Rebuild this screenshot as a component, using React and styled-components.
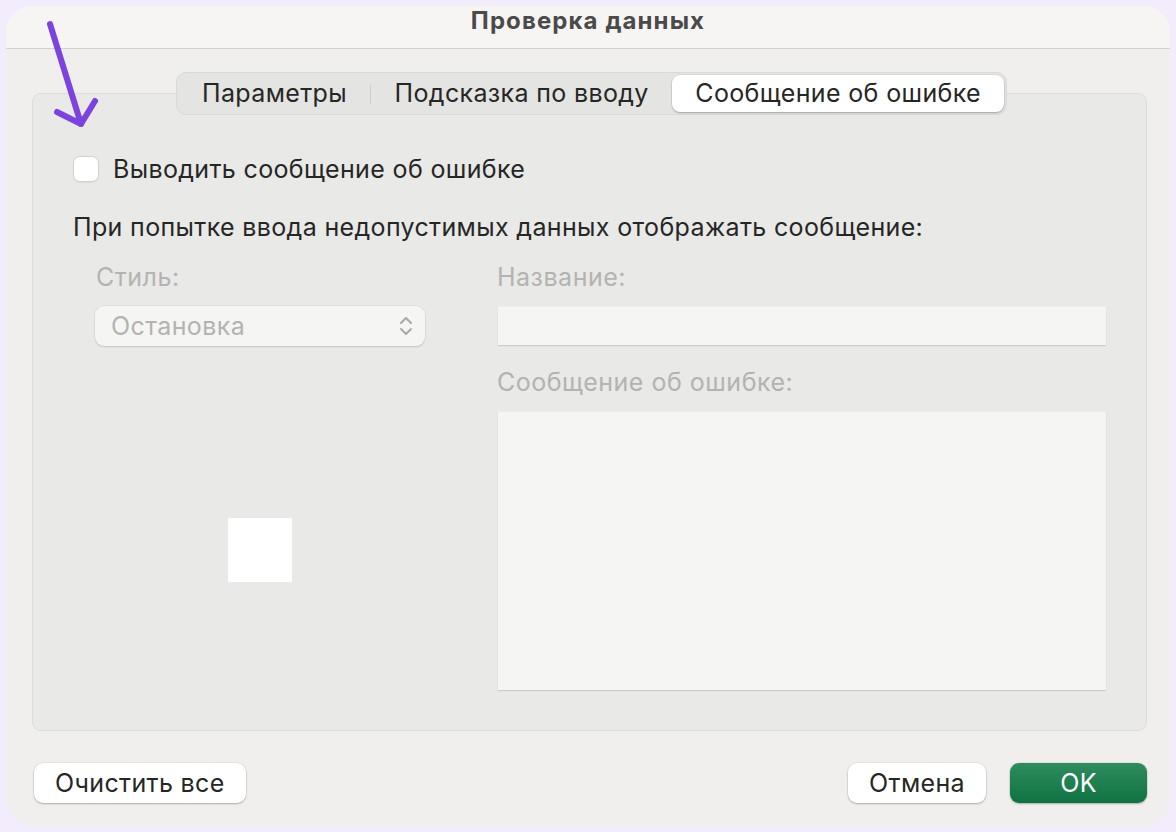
import React from 'react';
import styled, { createGlobalStyle } from 'styled-components';

const GlobalStyle = createGlobalStyle`
  html, body {
    margin: 0;
    padding: 0;
    background: #f3ecfc;
  }
  body {
    font-family: Inter, "Noto Sans", sans-serif;
    letter-spacing: 0.35px;
  }
`;

const Screen = styled.div`
  width: 1176px;
  height: 832px;
  box-sizing: border-box;
  padding: 6px;
  position: relative;
`;

const Dialog = styled.div`
  height: 100%;
  border-radius: 26px;
  overflow: hidden;
  background: #f0efed;
  display: flex;
  flex-direction: column;
`;

const TitleBar = styled.div`
  height: 42px;
  flex-shrink: 0;
  background: #f6f5f3;
  border-bottom: 1px solid #d2d1cf;
  display: flex;
  align-items: center;
  justify-content: center;
`;

const Title = styled.div`
  font-size: 24px;
  font-weight: 700;
  color: #4a4a4a;
  letter-spacing: 1.1px;
  margin-top: -14px;
`;

const Body = styled.div`
  flex: 1;
  display: flex;
  flex-direction: column;
  padding: 23px 23px 22px 26px;
`;

const TabBar = styled.div`
  align-self: center;
  display: flex;
  align-items: center;
  padding: 2px;
  background: #e4e4e2;
  border: 1px solid #d9d9d7;
  border-radius: 10px;
  margin-bottom: -22px;
  position: relative;
  z-index: 1;
  margin-left: 4px;
`;

const Tab = styled.div`
  height: 37px;
  box-sizing: border-box;
  padding: 0 23.3px 2px;
  display: flex;
  align-items: center;
  font-size: 25px;
  color: #262626;
  border-radius: 8px;
  background: ${p => (p.$active ? '#ffffff' : 'transparent')};
  box-shadow: ${p => (p.$active ? '0 1px 2px rgba(0,0,0,0.25), 0 0 0 0.5px rgba(0,0,0,0.08)' : 'none')};
`;

const TabDivider = styled.div`
  width: 1px;
  height: 20px;
  background: #cfcfcd;
`;

const Panel = styled.div`
  height: 638px;
  box-sizing: border-box;
  background: #e9e9e7;
  border: 1px solid #dcdcda;
  border-radius: 9px;
  padding: 60px 40px 40px 40px;
  display: flex;
  flex-direction: column;
`;

const CheckRow = styled.label`
  display: flex;
  align-items: center;
  gap: 14px;
  font-size: 25px;
  color: #262626;
`;

const Checkbox = styled.span`
  width: 26px;
  height: 26px;
  box-sizing: border-box;
  border-radius: 7px;
  background: #ffffff;
  border: 1px solid #d2d2d0;
  box-shadow: 0 1px 1px rgba(0,0,0,0.06);
`;

const Prompt = styled.div`
  margin-top: 28px;
  font-size: 25px;
  color: #262626;
`;

const Columns = styled.div`
  flex: 1;
  margin-top: 20px;
  padding-left: 22px;
  display: grid;
  grid-template-columns: 330px 608px;
  column-gap: 73px;
`;

const Column = styled.div`
  display: flex;
  flex-direction: column;
`;

const FieldLabel = styled.div`
  font-size: 25px;
  letter-spacing: 0.5px;
  color: #b3b3b1;
  height: 30px;
  margin-left: ${p => p.$indent || '0px'};
  margin-top: ${p => p.$gap || '0px'};
  margin-bottom: 14px;
`;

const SelectBox = styled.div`
  height: 40px;
  box-sizing: border-box;
  border-radius: 9px;
  background: #f5f5f3;
  box-shadow: 0 1px 2px rgba(0,0,0,0.14), 0 0 0 0.5px rgba(0,0,0,0.06);
  display: flex;
  align-items: center;
  justify-content: space-between;
  padding: 0 12px 0 16px;
  font-size: 25px;
  letter-spacing: 0.4px;
  color: #b3b3b1;
`;

const Chevrons = styled.svg`
  width: 14px;
  height: 22px;
`;

const IconArea = styled.div`
  flex: 1;
  display: flex;
  align-items: center;
  justify-content: center;
  padding-top: 64px;
`;

const IconSlot = styled.div`
  width: 64px;
  height: 64px;
  background: #ffffff;
`;

const TextField = styled.div`
  height: ${p => p.$h};
  flex-shrink: 0;
  background: #f5f5f3;
  border-top: 1px solid #ececea;
  box-shadow: 0 1px 1px rgba(0,0,0,0.12);
`;

const Footer = styled.div`
  margin-top: 32px;
  display: flex;
  align-items: center;
  padding-left: 2px;
`;

const Button = styled.button`
  height: 40px;
  padding: 0 ${p => p.$pad || '20px'};
  margin-left: ${p => p.$gap || '0px'};
  border: none;
  border-radius: 9px;
  font-family: inherit;
  font-size: 25px;
  letter-spacing: 0.35px;
  color: ${p => (p.$primary ? '#ffffff' : '#262626')};
  background: ${p => (p.$primary ? 'linear-gradient(#2f8c5e, #0f7241)' : '#ffffff')};
  box-shadow: 0 1px 2px rgba(0,0,0,0.25), 0 0 0 0.5px rgba(0,0,0,0.08);
  min-width: ${p => p.$w || 'auto'};
`;

const Spacer = styled.div`
  flex: 1;
`;

const Arrow = styled.svg`
  position: absolute;
  left: 40px;
  top: 16px;
  width: 70px;
  height: 120px;
  pointer-events: none;
`;

export default function App() {
  return (
    <>
      <GlobalStyle />
      <Screen>
        <Dialog>
          <TitleBar>
            <Title>Проверка данных</Title>
          </TitleBar>
          <Body>
            <TabBar>
              <Tab>Параметры</Tab>
              <TabDivider />
              <Tab>Подсказка по вводу</Tab>
              <Tab $active>Сообщение об ошибке</Tab>
            </TabBar>
            <Panel>
              <CheckRow>
                <Checkbox />
                Выводить сообщение об ошибке
              </CheckRow>
              <Prompt>При попытке ввода недопустимых данных отображать сообщение:</Prompt>
              <Columns>
                <Column>
                  <FieldLabel $indent="1px">Стиль:</FieldLabel>
                  <SelectBox>
                    Остановка
                    <Chevrons viewBox="0 0 14 22" fill="none" stroke="#a9a9a7" strokeWidth="2" strokeLinecap="round" strokeLinejoin="round">
                      <path d="M2 8 L7 3 L12 8" />
                      <path d="M2 14 L7 19 L12 14" />
                    </Chevrons>
                  </SelectBox>
                  <IconArea>
                    <IconSlot />
                  </IconArea>
                </Column>
                <Column>
                  <FieldLabel $indent="-1px">Название:</FieldLabel>
                  <TextField $h="38px" />
                  <FieldLabel $indent="-1px" $gap="22px">Сообщение об ошибке:</FieldLabel>
                  <TextField $h="278px" />
                </Column>
              </Columns>
            </Panel>
            <Footer>
              <Button $pad="21px">Очистить все</Button>
              <Spacer />
              <Button $pad="21px">Отмена</Button>
              <Button $primary $w="137px" $gap="24px">OK</Button>
            </Footer>
          </Body>
        </Dialog>
        <Arrow viewBox="0 0 70 120" fill="none" stroke="#7c44dc" strokeWidth="6" strokeLinecap="round" strokeLinejoin="round">
          <path d="M10 8 L41 108" />
          <path d="M17 96 L41 108 L55 85" />
        </Arrow>
      </Screen>
    </>
  );
}
